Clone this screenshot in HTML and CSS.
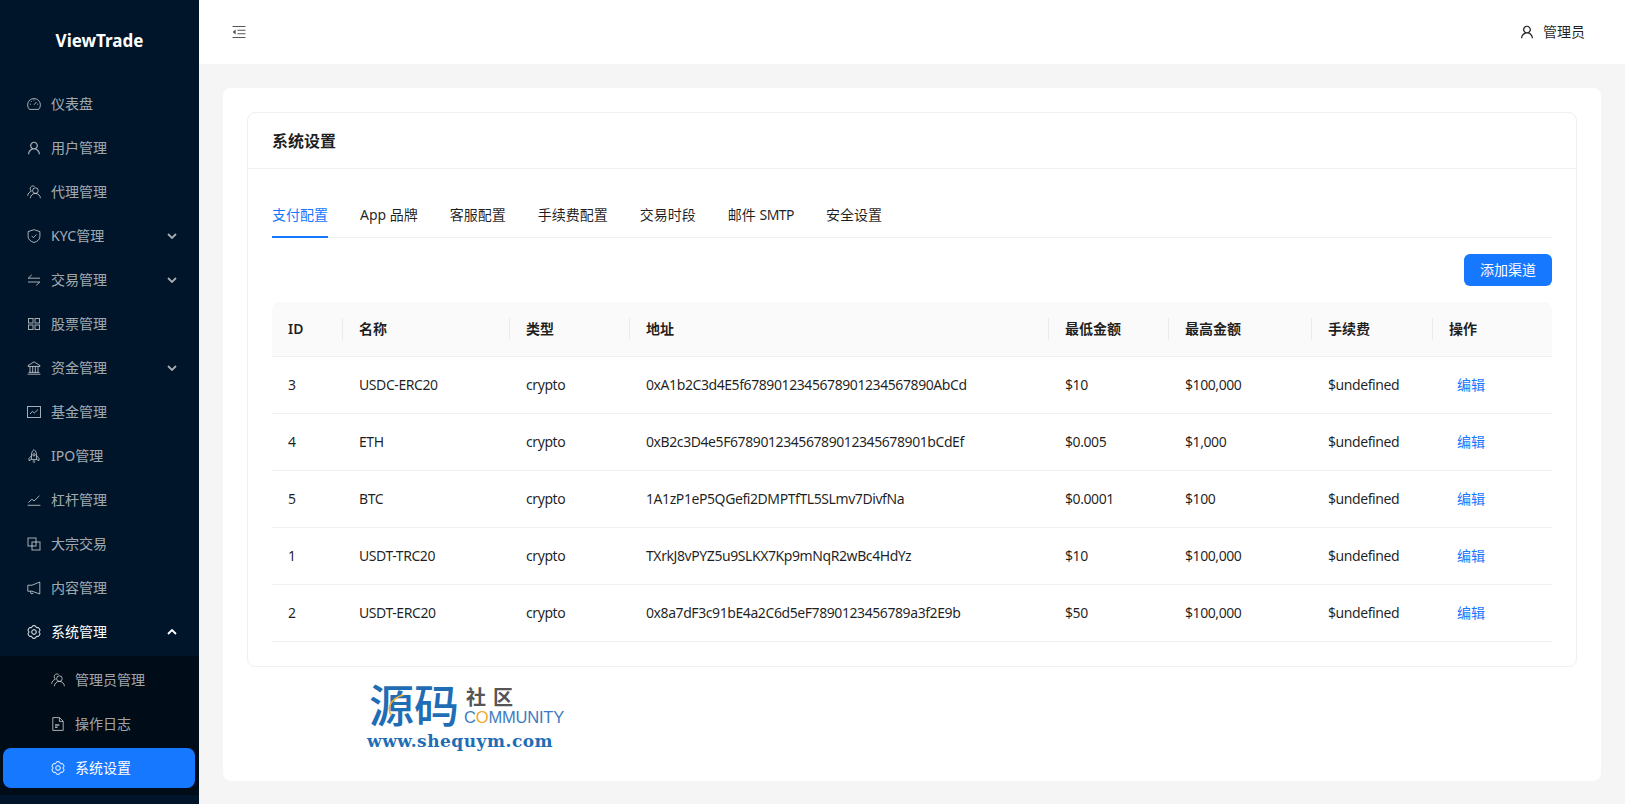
FILE: index.html
```html
<!DOCTYPE html>
<html lang="zh-CN">
<head>
  <meta charset="utf-8">
  <title>ViewTrade</title>
  <link rel="stylesheet" href="styles.css">
</head>
<body>
  <svg class="defs" width="0" height="0">
    <symbol id="i-dash" viewBox="0 0 14 14"><path d="M2.4 12.4A6.4 6.4 0 1 1 11.6 12.4Z"/><path d="M7 7.8 9.4 5M2.8 7.2h1M10.2 7.2h1M7 2.6v1M4 4l.7.7"/></symbol>
    <symbol id="i-user" viewBox="74 73 877 877"><path fill="currentColor" stroke="none" d="M858.5 763.6a374 374 0 0 0-80.6-119.5 375.63 375.63 0 0 0-119.5-80.6c-.4-.2-.8-.3-1.2-.5C719.5 518 760 444.7 760 362c0-137-111-248-248-248S264 225 264 362c0 82.7 40.5 156 102.8 201.1-.4.2-.8.3-1.2.5-44.8 18.9-85 46-119.5 80.6a375.63 375.63 0 0 0-80.6 119.5A371.7 371.7 0 0 0 136 901.8a8 8 0 0 0 8 8.2h60c4.4 0 7.9-3.5 8-7.8 2-77.2 33-149.5 87.8-204.3 56.7-56.7 132-87.9 212.2-87.9s155.5 31.2 212.2 87.9C779 752.7 810 825 812 902.2c.1 4.4 3.6 7.8 8 7.8h60a8 8 0 0 0 8-8.2c-1-47.8-10.9-94.3-29.5-138.2zM512 534c-45.9 0-89.1-17.9-121.6-50.4S340 407.9 340 362c0-45.9 17.9-89.1 50.4-121.6S466.1 190 512 190s89.1 17.9 121.6 50.4S684 316.1 684 362c0 45.9-17.9 89.1-50.4 121.6S557.9 534 512 534z"/></symbol>
    <symbol id="i-team" viewBox="0 0 14 14"><circle cx="8.4" cy="5.6" r="2.8"/><path d="M3.4 13.2C3.5 10.6 5.6 8.4 8.4 8.4S13.3 10.6 13.4 13.2"/><path d="M7.6 1.4A2.8 2.8 0 0 0 3.2 3.8C3.2 4.9 3.7 5.7 4.4 6.2 2.3 7 .9 8.6.7 10.8"/></symbol>
    <symbol id="i-shield" viewBox="0 0 14 14"><path d="M7 .7 12.9 2.6V7.6C12.9 10.6 10.2 12.5 7 13.5 3.8 12.5 1.1 10.6 1.1 7.6V2.6Z"/><path d="M4.7 6.9 6.4 8.7 9.4 5.5"/></symbol>
    <symbol id="i-swap" viewBox="0 0 14 14"><path d="M13 5.2H1.2L4.8 1.8M1 9H12.8L9.2 12.4"/></symbol>
    <symbol id="i-grid" viewBox="0 0 14 14"><rect x="1.5" y="1.5" width="4.5" height="4.5"/><rect x="8" y="1.5" width="4.5" height="4.5"/><rect x="1.5" y="8" width="4.5" height="4.5"/><rect x="8" y="8" width="4.5" height="4.5"/></symbol>
    <symbol id="i-bank" viewBox="0 0 14 14"><path d="M7 .8 13 4.6V5.4H1V4.6ZM.6 13.2H13.4M1.6 11.4H12.4M3 5.4V11.4M5.7 5.4V11.4M8.3 5.4V11.4M11 5.4V11.4"/></symbol>
    <symbol id="i-fund" viewBox="0 0 14 14"><rect x=".5" y="1.5" width="13" height="11"/><path d="M3 9 5.5 6.3 7.3 8 11 4.6"/></symbol>
    <symbol id="i-rocket" viewBox="0 0 14 14"><path d="M7 .6C8.8 2 9.6 4 9.6 6V10.4H4.4V6C4.4 4 5.2 2 7 .6Z"/><circle cx="7" cy="5.8" r="1.2"/><path d="M4.4 6.8 2 9.4V11.6L4.4 10.4M9.6 6.8 12 9.4V11.6L9.6 10.4M5.6 12H8.4M6.4 13.4H7.6"/></symbol>
    <symbol id="i-stock" viewBox="0 0 14 14"><path d="M.6 12.3H13.4M1.4 9.6 5 6.2 7 8 12.4 2.8"/></symbol>
    <symbol id="i-block" viewBox="0 0 14 14"><rect x="1" y="1" width="8" height="8"/><rect x="5" y="5" width="8" height="8"/></symbol>
    <symbol id="i-sound" viewBox="0 0 14 14"><path d="M12.8 1V13L5 10.2H.8V4.2H5ZM3.4 10.4 4.2 12.8 6.4 12.2"/></symbol>
    <symbol id="i-gear" viewBox="0 0 14 14"><path d="M5.56.76H8.44L9.45 2.76 11.68 2.64 13.12 5.13 11.9 7 13.12 8.87 11.68 11.36 9.45 11.24 8.44 13.24H5.56L4.55 11.24 2.32 11.36.88 8.87 2.1 7 .88 5.13 2.32 2.64 4.55 2.76Z"/><circle cx="7" cy="7" r="2.3"/></symbol>
    <symbol id="i-file" viewBox="0 0 14 14"><path d="M1.8 .6H8.6L12.2 4.2V13.4H1.8ZM8.4 1V4.4H12"/><path stroke-width="1.6" d="M4 8H8.4M4 10.2H6.6"/></symbol>
  </svg>

  <div class="layout">
    <aside class="sider">
      <div class="logo">ViewTrade</div>
      <ul class="menu">
        <li class="item"><svg class="icon"><use href="#i-dash"/></svg>仪表盘</li>
        <li class="item"><svg class="icon"><use href="#i-user"/></svg>用户管理</li>
        <li class="item"><svg class="icon"><use href="#i-team"/></svg>代理管理</li>
        <li class="item"><svg class="icon"><use href="#i-shield"/></svg>KYC管理<svg class="arrow" viewBox="0 0 10 6"><path d="M1 1l4 4 4-4"/></svg></li>
        <li class="item"><svg class="icon"><use href="#i-swap"/></svg>交易管理<svg class="arrow" viewBox="0 0 10 6"><path d="M1 1l4 4 4-4"/></svg></li>
        <li class="item"><svg class="icon"><use href="#i-grid"/></svg>股票管理</li>
        <li class="item"><svg class="icon"><use href="#i-bank"/></svg>资金管理<svg class="arrow" viewBox="0 0 10 6"><path d="M1 1l4 4 4-4"/></svg></li>
        <li class="item"><svg class="icon"><use href="#i-fund"/></svg>基金管理</li>
        <li class="item"><svg class="icon"><use href="#i-rocket"/></svg>IPO管理</li>
        <li class="item"><svg class="icon"><use href="#i-stock"/></svg>杠杆管理</li>
        <li class="item"><svg class="icon"><use href="#i-block"/></svg>大宗交易</li>
        <li class="item"><svg class="icon"><use href="#i-sound"/></svg>内容管理</li>
        <li class="item open"><svg class="icon"><use href="#i-gear"/></svg>系统管理<svg class="arrow" viewBox="0 0 10 6"><path d="M1 5l4-4 4 4"/></svg></li>
      </ul>
      <ul class="submenu">
        <li class="item"><svg class="icon"><use href="#i-team"/></svg>管理员管理</li>
        <li class="item"><svg class="icon"><use href="#i-file"/></svg>操作日志</li>
        <li class="item active"><svg class="icon"><use href="#i-gear"/></svg>系统设置</li>
      </ul>
    </aside>

    <div class="main">
      <header class="topbar">
        <svg class="fold" viewBox="0 0 14 14"><path d="M.5 1.5h13M5.5 5.2h8M5.5 8.8h8M.5 12.5h13"/><path class="fill" d="M3.6 4.6v4.8L.6 7z"/></svg>
        <div class="account"><svg class="icon"><use href="#i-user"/></svg>管理员</div>
      </header>

      <main class="content">
        <section class="card">
          <h2 class="card-title">系统设置</h2>
          <div class="card-body">
            <nav class="tabs">
              <a class="tab current">支付配置</a>
              <a class="tab">App 品牌</a>
              <a class="tab">客服配置</a>
              <a class="tab">手续费配置</a>
              <a class="tab">交易时段</a>
              <a class="tab">邮件 <span class="narrow">SMTP</span></a>
              <a class="tab">安全设置</a>
            </nav>
            <div class="toolbar"><button class="btn">添加渠道</button></div>
            <table class="grid">
              <thead>
                <tr><th>ID</th><th>名称</th><th>类型</th><th>地址</th><th>最低金额</th><th>最高金额</th><th>手续费</th><th>操作</th></tr>
              </thead>
              <tbody>
                <tr><td>3</td><td>USDC-ERC20</td><td>crypto</td><td>0xA1b2C3d4E5f6789012345678901234567890AbCd</td><td>$10</td><td>$100,000</td><td>$undefined</td><td><a class="link">编辑</a></td></tr>
                <tr><td>4</td><td>ETH</td><td>crypto</td><td>0xB2c3D4e5F67890123456789012345678901bCdEf</td><td>$0.005</td><td>$1,000</td><td>$undefined</td><td><a class="link">编辑</a></td></tr>
                <tr><td>5</td><td>BTC</td><td>crypto</td><td>1A1zP1eP5QGefi2DMPTfTL5SLmv7DivfNa</td><td>$0.0001</td><td>$100</td><td>$undefined</td><td><a class="link">编辑</a></td></tr>
                <tr><td>1</td><td>USDT-TRC20</td><td>crypto</td><td>TXrkJ8vPYZ5u9SLKX7Kp9mNqR2wBc4HdYz</td><td>$10</td><td>$100,000</td><td>$undefined</td><td><a class="link">编辑</a></td></tr>
                <tr><td>2</td><td>USDT-ERC20</td><td>crypto</td><td>0x8a7dF3c91bE4a2C6d5eF7890123456789a3f2E9b</td><td>$50</td><td>$100,000</td><td>$undefined</td><td><a class="link">编辑</a></td></tr>
              </tbody>
            </table>
          </div>
        </section>

        <div class="stamp">
          <div class="stamp-top">
            <span class="stamp-big">源码</span>
            <svg class="stamp-arc" viewBox="0 0 24 30"><path d="M22 1C12 3 3 11 3 20c0 3 1 6 3 8"/></svg>
            <div class="stamp-side">
              <span class="stamp-cn">社区</span>
              <span class="stamp-en">C<i>O</i>MMUNITY</span>
            </div>
          </div>
          <div class="stamp-url">www.shequym.com</div>
        </div>
      </main>
    </div>
  </div>
</body>
</html>
```

FILE: styles.css
```css
* {
  box-sizing: border-box;
}
html, body {
  margin: 0;
  height: 100%;
  overflow: hidden;
}
body {
  background-color: #f5f5f5;
  color: rgba(0, 0, 0, 0.88);
  font-family: "Noto Sans", "Noto Sans CJK SC", sans-serif;
  font-size: 14px;
  line-height: 22px;
}
ul {
  margin: 0;
  padding: 0;
  list-style: none;
}
.defs {
  position: absolute;
}
.layout {
  display: flex;
  height: 804px;
}

/* sidebar */
.sider {
  width: 199px;
  flex: none;
  background-color: #001529;
  overflow: hidden;
}
.logo {
  height: 80px;
  padding-top: 2px;
  display: flex;
  align-items: center;
  justify-content: center;
  color: #fff;
  font-size: 17px;
  font-weight: 700;
}
.item {
  display: flex;
  align-items: center;
  gap: 10px;
  height: 40px;
  margin: 4px 0;
  padding: 0 22px 0 27px;
  color: rgba(255, 255, 255, 0.65);
}
.item.open {
  color: #fff;
}
.icon {
  width: 14px;
  height: 14px;
  flex: none;
  fill: none;
  stroke: currentColor;
  stroke-width: 1;
}
.arrow {
  width: 10px;
  height: 6px;
  margin-left: auto;
  fill: none;
  stroke: currentColor;
  stroke-width: 1.8;
}
.submenu {
  display: flow-root;
  padding-bottom: 3px;
  background-color: #000c17;
}
.submenu .item {
  margin: 4px 4px 4px 3px;
  padding-left: 48px;
  border-radius: 8px;
}
.submenu .item.active {
  background-color: #1677ff;
  color: #fff;
}

/* right side */
.main {
  flex: 1;
  display: flex;
  flex-direction: column;
  min-width: 0;
}
.topbar {
  height: 64px;
  flex: none;
  display: flex;
  align-items: center;
  justify-content: space-between;
  padding: 0 40px 0 33px;
  background-color: #fff;
}
.fold {
  width: 14px;
  height: 14px;
  fill: none;
  stroke: #555;
  stroke-width: 1.1;
}
.fold .fill {
  fill: #555;
  stroke: none;
}
.account {
  display: flex;
  align-items: center;
  gap: 9px;
}
.content {
  position: relative;
  flex: 1;
  margin: 24px 24px 23px;
  padding: 24px;
  background-color: #fff;
  border-radius: 8px;
}
.card {
  border: 1px solid #f0f0f0;
  border-radius: 8px;
}
.card-title {
  margin: 0;
  height: 56px;
  padding: 0 24px;
  display: flex;
  align-items: center;
  border-bottom: 1px solid #f0f0f0;
  font-size: 16px;
  font-weight: 600;
}
.card-body {
  padding: 23px 24px 24px;
}

/* tabs */
.tabs {
  display: flex;
  gap: 32px;
  margin-bottom: 16px;
  border-bottom: 1px solid #f0f0f0;
}
.tab {
  padding: 12px 0;
  margin-bottom: -1px;
  border-bottom: 2px solid transparent;
  height: 46px;
}
.tab.current {
  color: #1677ff;
  border-bottom-color: #1677ff;
}
.narrow {
  letter-spacing: -0.5px;
}
.toolbar {
  display: flex;
  justify-content: flex-end;
  margin-bottom: 16px;
}
.btn {
  height: 32px;
  padding: 0 16px;
  border: 0;
  border-radius: 6px;
  background-color: #1677ff;
  color: #fff;
  font: inherit;
}

/* table */
.grid {
  width: 100%;
  table-layout: fixed;
  border-collapse: separate;
  border-spacing: 0;
}
.grid th, .grid td {
  padding: 16px;
  text-align: left;
  border-bottom: 1px solid #f0f0f0;
}
.grid th {
  position: relative;
  background-color: #fafafa;
  font-weight: 600;
}
.grid th:first-child {
  border-top-left-radius: 8px;
}
.grid th:last-child {
  border-top-right-radius: 8px;
}
.grid th:not(:last-child)::before {
  content: "";
  position: absolute;
  top: 16px;
  right: 0;
  width: 1px;
  height: 22px;
  background-color: rgba(0, 0, 0, 0.06);
}
.grid th:nth-child(1) { width: 71px; }
.grid th:nth-child(2) { width: 167px; }
.grid th:nth-child(3) { width: 120px; }
.grid th:nth-child(4) { width: 419px; }
.grid th:nth-child(5) { width: 120px; }
.grid th:nth-child(6) { width: 143px; }
.grid th:nth-child(7) { width: 121px; }
.grid td {
  letter-spacing: -0.42px;
}
.link {
  display: inline-block;
  height: 24px;
  line-height: 24px;
  padding: 0 8px;
  color: #1677ff;
  letter-spacing: 0;
}

/* watermark picture */
.stamp {
  position: absolute;
  left: 144px;
  top: 593px;
  width: 210px;
}
.stamp-top {
  position: relative;
  display: flex;
  gap: 5px;
  padding-left: 2px;
}
.stamp-big {
  color: #1f6db5;
  font-size: 45px;
  line-height: 50px;
  font-weight: 500;
}
.stamp-arc {
  position: absolute;
  left: 20px;
  top: 11px;
  width: 18px;
  height: 27px;
  fill: none;
  stroke: #f0a92e;
  stroke-width: 2;
}
.stamp-side {
  display: flex;
  flex-direction: column;
  padding-top: 5px;
}
.stamp-cn {
  padding-left: 2px;
  color: #555;
  font-size: 20px;
  line-height: 24px;
  font-weight: 700;
  letter-spacing: 7px;
}
.stamp-en {
  font-family: "Liberation Sans", sans-serif;
  font-size: 16.5px;
  line-height: 15px;
  color: #3d7cc0;
  letter-spacing: -0.2px;
}
.stamp-en i {
  font-style: normal;
  color: #f0a92e;
}
.stamp-url {
  margin-top: 0;
  color: #1f6db5;
  font-family: "DejaVu Serif", serif;
  font-size: 17px;
  line-height: 20px;
  font-weight: 700;
  letter-spacing: 0.5px;
}
```
